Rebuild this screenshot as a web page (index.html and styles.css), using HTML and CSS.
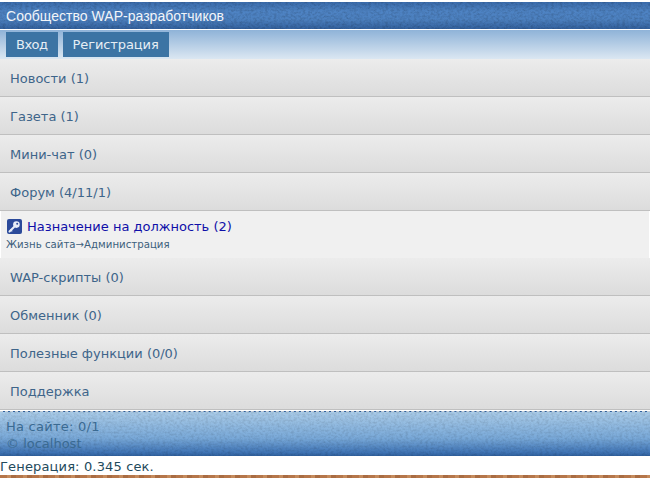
FILE: index.html
```html
<!DOCTYPE html>
<html lang="ru">
<head>
<meta charset="utf-8">
<title>Сообщество WAP-разработчиков</title>
<link rel="stylesheet" href="styles.css">
</head>
<body>
<header class="title">Сообщество WAP-разработчиков</header>
<nav class="auth">
  <a class="btn btn-short">Вход</a>
  <a class="btn">Регистрация</a>
</nav>
<main class="menu">
  <a class="row">Новости (1)</a>
  <a class="row">Газета (1)</a>
  <a class="row">Мини-чат (0)</a>
  <a class="row">Форум (4/11/1)</a>
  <div class="topic">
    <div class="topic-title">
      <svg class="key" width="15" height="15" viewBox="0 0 15 15" aria-hidden="true">
        <rect width="15" height="15" rx="2" fill="#2b4a9a"/>
        <path d="M2.5 12.5 7 8" stroke="#e8eef8" stroke-width="2" fill="none" stroke-linecap="round"/>
        <path d="M3.5 10.6 5.2 12.3" stroke="#e8eef8" stroke-width="1.2" fill="none"/>
        <circle cx="9.4" cy="5.6" r="3.3" fill="#e8eef8"/>
        <circle cx="10.2" cy="4.8" r="1" fill="#2b4a9a"/>
      </svg>
      <a class="topic-link">Назначение на должность (2)</a>
    </div>
    <div class="crumbs">Жизнь сайта→Администрация</div>
  </div>
  <a class="row">WAP-скрипты (0)</a>
  <a class="row">Обменник (0)</a>
  <a class="row">Полезные функции (0/0)</a>
  <a class="row">Поддержка</a>
</main>
<footer class="foot">
  <div class="wide">На сайте: 0/1</div>
  <div>© localhost</div>
</footer>
<div class="gen">Генерация: 0.345 сек.</div>
<div class="wood"></div>
</body>
</html>
```

FILE: styles.css
```css
* { box-sizing: border-box; }
html, body { margin: 0; padding: 0; }
body {
  height: 478px;
  overflow: hidden;
  display: flex;
  flex-direction: column;
  padding-top: 2px;
  background: #fff;
  font: 13px/16px "DejaVu Sans", Verdana, sans-serif;
  color: #3e658a;
}
.title {
  height: 27px;
  padding: 1px 6px 0;
  display: flex;
  align-items: center;
  flex: none;
  font: 14px/16px "Liberation Sans", Arial, sans-serif;
  letter-spacing: .03px;
  color: #f2f5f9;
  background:
    url("data:image/svg+xml,%3Csvg xmlns='http://www.w3.org/2000/svg' width='650' height='60'%3E%3Cfilter id='n'%3E%3CfeTurbulence type='fractalNoise' baseFrequency='.35 .5' numOctaves='3' seed='4'/%3E%3CfeColorMatrix values='0 0 0 0 0 0 0 0 0 0 0 0 0 0 0 0 0 0 1.1 -.42'/%3E%3C/filter%3E%3Crect width='650' height='60' filter='url(%23n)' opacity='.3'/%3E%3C/svg%3E"),
    linear-gradient(#3a6bab, #4e83c3 35%, #4c80bf 65%, #33619e);
}
.auth {
  height: 29px;
  margin-top: 1px;
  padding: 2px 6px 0;
  display: flex;
  gap: 5px;
  background: linear-gradient(#8fb3d8, #dbe7f2);
  flex: none;
}
.btn {
  height: 25px;
  padding: 1px 10px 0;
  display: flex;
  align-items: center;
  background: #3c74a4;
  color: #e6eef5;
  letter-spacing: -.1px;
}
.btn-short { letter-spacing: -.5px; }
.menu { display: flex; flex-direction: column; flex: none; }
.row {
  height: 38px;
  padding: 2px 10px 0;
  display: flex;
  align-items: center;
  background: linear-gradient(#ececec, #dcdcdc);
  border-bottom: 1px solid #bfbfbf;
}
.topic {
  height: 47px;
  margin: 0 1px;
  padding: 7px 5px 0;
  background: #f0f0f0;
}
.topic-title { display: flex; align-items: center; gap: 5px; height: 17px; }
.key { flex: none; margin-left: 1px; }
.topic-link { color: #0f0fa8; }
.crumbs { margin-top: 3px; font-size: 10.2px; line-height: 14px; color: #3d5f7c; white-space: nowrap; }
.foot {
  height: 45px;
  margin-top: 1px;
  padding: 6px 6px 0;
  line-height: 17px;
  color: #3a6a92;
  flex: none;
  border-top: 1px dashed #c3cfd8;
  background:
    url("data:image/svg+xml,%3Csvg xmlns='http://www.w3.org/2000/svg' width='650' height='60'%3E%3Cfilter id='n'%3E%3CfeTurbulence type='fractalNoise' baseFrequency='.35 .5' numOctaves='3' seed='9'/%3E%3CfeColorMatrix values='0 0 0 0 0 0 0 0 0 0 0 0 0 0 0 0 0 0 1.1 -.42'/%3E%3C/filter%3E%3Crect width='650' height='60' filter='url(%23n)' opacity='.22'/%3E%3C/svg%3E"),
    linear-gradient(#a9cbe8, #78a8d8 60%, #3f74b5 92%, #2f5f9c);
}
.wide { letter-spacing: .25px; }
.gen {
  height: 19px;
  padding-top: 3px;
  color: #234a5c;
  line-height: 16px;
  letter-spacing: .15px;
  flex: none;
}
.wood {
  flex: 1;
  background: repeating-linear-gradient(90deg, #b5764a 0 7px, #c48a5c 7px 11px, #a96c42 11px 16px);
}
```
